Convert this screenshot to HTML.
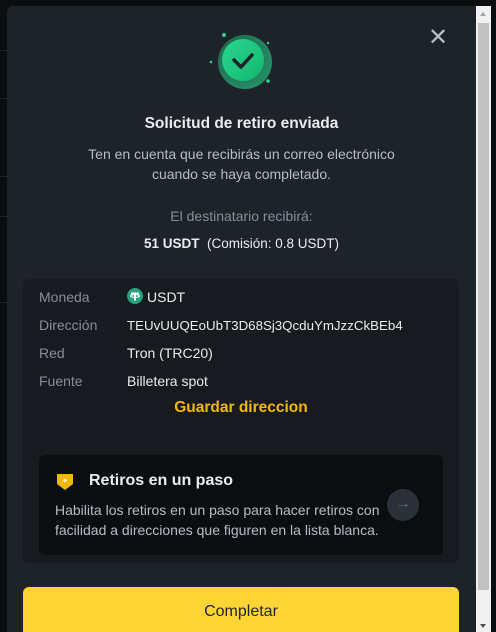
<!DOCTYPE html>
<html><head><meta charset="utf-8"><style>
*{margin:0;padding:0;box-sizing:border-box}
html,body{width:496px;height:632px;overflow:hidden}
body{background:#0b0e11;position:relative;font-family:"Liberation Sans",sans-serif;color:#eaecef}
.modal{position:absolute;left:7px;top:6px;width:469px;height:626px;background:#1e2329;border-radius:6px 0 0 0}
.sb{position:absolute;left:476px;top:6px;width:15px;height:626px;background:#f1f1f1}
.thumb{position:absolute;left:478px;top:23px;width:11px;height:567px;background:#c1c1c1}
.c{position:absolute;left:7px;width:469px;text-align:center}
.lab{position:absolute;left:39px;font-size:14px;color:#848e9c}
.val{position:absolute;left:127px;font-size:14px;color:#eaecef}
</style></head><body>
<div style="position:absolute;left:0;top:50px;width:7px;height:1px;background:#1e2329"></div>
<div style="position:absolute;left:0;top:98px;width:7px;height:1px;background:#1e2329"></div>
<div style="position:absolute;left:0;top:176px;width:7px;height:1px;background:#1e2329"></div>
<div style="position:absolute;left:0;top:216px;width:7px;height:1px;background:#1e2329"></div>
<div style="position:absolute;left:0;top:302px;width:7px;height:1px;background:#1e2329"></div>
<div class="modal"></div>
<div class="sb"></div><div class="thumb"></div>
<div style="position:absolute;left:480px;top:12px;width:0;height:0;border:3px solid transparent;border-bottom:4px solid #a3a3a3;border-top:0"></div>
<div style="position:absolute;left:480px;top:624px;width:0;height:0;border:3px solid transparent;border-top:4px solid #505050;border-bottom:0"></div>
<svg style="position:absolute;left:200px;top:25px" width="100" height="70" viewBox="0 0 100 70">
<defs><radialGradient id="g" cx="0.35" cy="0.35" r="0.8"><stop offset="0" stop-color="#1a6b4a"/><stop offset="1" stop-color="#28a877"/></radialGradient>
<linearGradient id="g2" x1="0" y1="0" x2="1" y2="1"><stop offset="0" stop-color="#2ed592"/><stop offset="1" stop-color="#10b86d"/></linearGradient></defs>
<circle cx="45" cy="37" r="27" fill="url(#g)" opacity="0.85"/>
<circle cx="43" cy="35" r="21" fill="url(#g2)"/>
<path d="M34 35 L41 42 L52 30" fill="none" stroke="#1e2329" stroke-width="3.5" stroke-linecap="round" stroke-linejoin="round"/>
<circle cx="24" cy="10" r="2" fill="#2ed592"/><circle cx="68" cy="18" r="1.2" fill="#2ed592"/><circle cx="11" cy="37" r="1.3" fill="#2ed592"/><circle cx="68" cy="56" r="1.8" fill="#2ed592"/>
</svg>
<div style="position:absolute;left:428px;top:26px;font-size:24px;color:#b7bdc6;line-height:24px">✕</div>
<div class="c" style="top:115px;font-size:15.5px;font-weight:bold">Solicitud de retiro enviada</div>
<div class="c" style="top:144px;font-size:14px;line-height:20px;color:#b7bdc6">Ten en cuenta que recibirás un correo electrónico<br>cuando se haya completado.</div>
<div class="c" style="top:208px;font-size:14px;color:#848e9c">El destinatario recibirá:</div>
<div class="c" style="top:236px;font-size:13.5px"><b>51 USDT</b>&nbsp; (Comisión: 0.8 USDT)</div>
<div style="position:absolute;left:23px;top:279px;width:436px;height:284px;background:#181a20;border-radius:6px"></div>
<div class="lab" style="top:289px">Moneda</div>
<svg style="position:absolute;left:127px;top:288px" width="16" height="16" viewBox="0 0 16 16"><circle cx="8" cy="8" r="8" fill="#26a17b"/><path d="M4 4.5h8v2H9v6H7v-6H4z" fill="#fff"/><ellipse cx="8" cy="8" rx="4.5" ry="1.4" fill="none" stroke="#fff" stroke-width="1"/></svg>
<div class="val" style="top:289px;left:147px">USDT</div>
<div class="lab" style="top:317px">Dirección</div><div class="val" style="top:318px;font-size:13.3px">TEUvUUQEoUbT3D68Sj3QcduYmJzzCkBEb4</div>
<div class="lab" style="top:345px">Red</div><div class="val" style="top:345px">Tron (TRC20)</div>
<div class="lab" style="top:373px">Fuente</div><div class="val" style="top:373px">Billetera spot</div>
<div style="position:absolute;left:0;width:482px;text-align:center;top:399px;font-size:15.5px;font-weight:bold;color:#f0b90b">Guardar direccion</div>
<div style="position:absolute;left:39px;top:455px;width:404px;height:100px;background:#0b0e11;border-radius:6px"></div>
<svg style="position:absolute;left:56px;top:473px" width="18" height="18" viewBox="0 0 18 18"><path d="M1 1h16v10l-8 6-8-6z" fill="#f0b90b"/><rect x="7.5" y="6" width="3" height="3" fill="#fff" opacity="0.8" transform="rotate(45 9 7.5)"/></svg>
<div style="position:absolute;left:89px;top:472px;font-size:16px;font-weight:bold">Retiros en un paso</div>
<div style="position:absolute;left:55px;top:500px;font-size:14px;line-height:20px;color:#b7bdc6">Habilita los retiros en un paso para hacer retiros con<br>facilidad a direcciones que figuren en la lista blanca.</div>
<div style="position:absolute;left:387px;top:489px;width:32px;height:32px;border-radius:50%;background:#2b3139;color:#5e6673;text-align:center;line-height:30px;font-size:16px">→</div>
<div style="position:absolute;left:23px;top:587px;width:436px;height:45px;background:#fcd535;border-radius:6px 6px 0 0;text-align:center;padding-top:16px;font-size:16px;color:#202630">Completar</div>
</body></html>
